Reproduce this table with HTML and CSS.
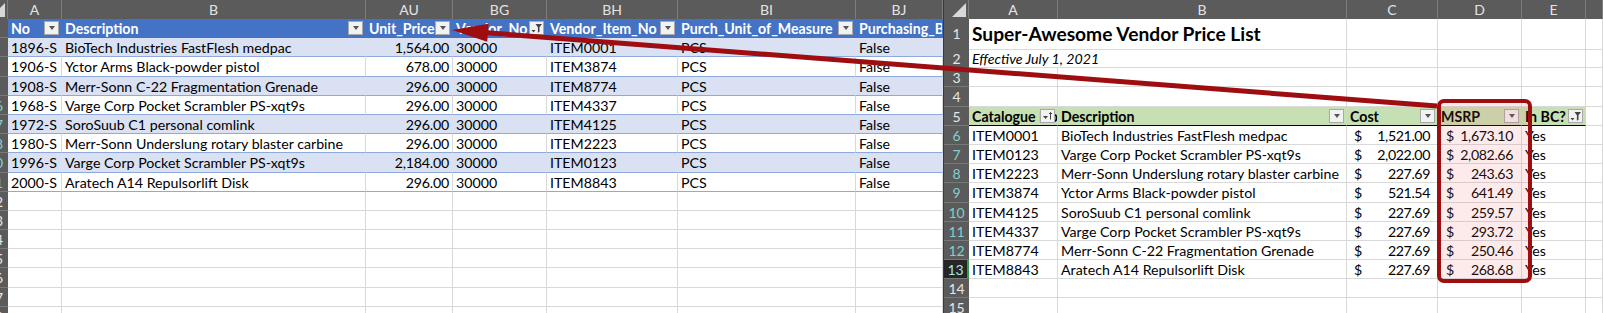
FILE: index.html
```html
<!DOCTYPE html>
<html>
<head>
<meta charset="utf-8">
<link rel="stylesheet" href="styles.css">
</head>
<body>
<div class="screen">
  <section class="sheet left">
    <div class="row colhdr">
      <div class="corner"></div><div class="ch">A</div><div class="ch">B</div><div class="ch dbl">AU</div><div class="ch">BG</div><div class="ch">BH</div><div class="ch">BI</div><div class="ch">BJ</div>
    </div>
    <div class="row thead">
      <div class="rh"></div>
      <div class="c">No<span class="fb dd"></span></div>
      <div class="c">Description<span class="fb dd"></span></div>
      <div class="c">Unit_Price<span class="fb dd"></span></div>
      <div class="c">Vendor_No<span class="fb"><svg width="13" height="12" viewBox="0 0 13 12"><path d="M1.5 8h4l-2 2.5z" fill="#444"/><path d="M5.5 2h6.5l-2.5 3.2v4.6l-1.6.9V5.2z" fill="#444"/></svg></span></div>
      <div class="c">Vendor_Item_No<span class="fb dd"></span></div>
      <div class="c">Purch_Unit_of_Measure<span class="fb dd"></span></div>
      <div class="c">Purchasing_Bl</div>
    </div>
    <div class="row band">
      <div class="rh"></div><div class="c">1896-S</div><div class="c">BioTech Industries FastFlesh medpac</div><div class="c num">1,564.00</div><div class="c">30000</div><div class="c">ITEM0001</div><div class="c">PCS</div><div class="c">False</div>
    </div>
    <div class="row plain">
      <div class="rh"></div><div class="c">1906-S</div><div class="c">Yctor Arms Black-powder pistol</div><div class="c num">678.00</div><div class="c">30000</div><div class="c">ITEM3874</div><div class="c">PCS</div><div class="c">False</div>
    </div>
    <div class="row band">
      <div class="rh"></div><div class="c">1908-S</div><div class="c">Merr-Sonn C-22 Fragmentation Grenade</div><div class="c num">296.00</div><div class="c">30000</div><div class="c">ITEM8774</div><div class="c">PCS</div><div class="c">False</div>
    </div>
    <div class="row plain">
      <div class="rh flt"><span>16</span></div><div class="c">1968-S</div><div class="c">Varge Corp Pocket Scrambler PS-xqt9s</div><div class="c num">296.00</div><div class="c">30000</div><div class="c">ITEM4337</div><div class="c">PCS</div><div class="c">False</div>
    </div>
    <div class="row band">
      <div class="rh flt"><span>17</span></div><div class="c">1972-S</div><div class="c">SoroSuub C1 personal comlink</div><div class="c num">296.00</div><div class="c">30000</div><div class="c">ITEM4125</div><div class="c">PCS</div><div class="c">False</div>
    </div>
    <div class="row plain">
      <div class="rh flt"><span>18</span></div><div class="c">1980-S</div><div class="c">Merr-Sonn Underslung rotary blaster carbine</div><div class="c num">296.00</div><div class="c">30000</div><div class="c">ITEM2223</div><div class="c">PCS</div><div class="c">False</div>
    </div>
    <div class="row band">
      <div class="rh flt"><span>20</span></div><div class="c">1996-S</div><div class="c">Varge Corp Pocket Scrambler PS-xqt9s</div><div class="c num">2,184.00</div><div class="c">30000</div><div class="c">ITEM0123</div><div class="c">PCS</div><div class="c">False</div>
    </div>
    <div class="row plain">
      <div class="rh flt"><span>21</span></div><div class="c">2000-S</div><div class="c">Aratech A14 Repulsorlift Disk</div><div class="c num">296.00</div><div class="c">30000</div><div class="c">ITEM8843</div><div class="c">PCS</div><div class="c">False</div>
    </div>
    <div class="row"><div class="rh"><span>22</span></div><div class="c"></div><div class="c"></div><div class="c"></div><div class="c"></div><div class="c"></div><div class="c"></div><div class="c"></div></div>
    <div class="row"><div class="rh"><span>23</span></div><div class="c"></div><div class="c"></div><div class="c"></div><div class="c"></div><div class="c"></div><div class="c"></div><div class="c"></div></div>
    <div class="row"><div class="rh"><span>24</span></div><div class="c"></div><div class="c"></div><div class="c"></div><div class="c"></div><div class="c"></div><div class="c"></div><div class="c"></div></div>
    <div class="row"><div class="rh"><span>25</span></div><div class="c"></div><div class="c"></div><div class="c"></div><div class="c"></div><div class="c"></div><div class="c"></div><div class="c"></div></div>
    <div class="row"><div class="rh"><span>26</span></div><div class="c"></div><div class="c"></div><div class="c"></div><div class="c"></div><div class="c"></div><div class="c"></div><div class="c"></div></div>
    <div class="row"><div class="rh"><span>27</span></div><div class="c"></div><div class="c"></div><div class="c"></div><div class="c"></div><div class="c"></div><div class="c"></div><div class="c"></div></div>
    <div class="row"><div class="rh"><span>28</span></div><div class="c"></div><div class="c"></div><div class="c"></div><div class="c"></div><div class="c"></div><div class="c"></div><div class="c"></div></div>
  </section>

  <section class="sheet right">
    <div class="row colhdr">
      <div class="corner"></div><div class="ch">A</div><div class="ch">B</div><div class="ch">C</div><div class="ch">D</div><div class="ch">E</div><div class="ch"></div>
    </div>
    <div class="row r1">
      <div class="rh">1</div><div class="c title">Super-Awesome Vendor Price List</div><div class="c"></div><div class="c"></div><div class="c"></div><div class="c"></div>
    </div>
    <div class="row">
      <div class="rh">2</div><div class="c sub">Effective July 1, 2021</div><div class="c"></div><div class="c"></div><div class="c"></div><div class="c"></div>
    </div>
    <div class="row">
      <div class="rh">3</div><div class="c"></div><div class="c"></div><div class="c"></div><div class="c"></div><div class="c"></div><div class="c"></div>
    </div>
    <div class="row">
      <div class="rh">4</div><div class="c"></div><div class="c"></div><div class="c"></div><div class="c"></div><div class="c"></div><div class="c"></div>
    </div>
    <div class="row ghead">
      <div class="rh">5</div>
      <div class="c g">Catalogue No<span class="fb"><svg width="13" height="12" viewBox="0 0 13 12"><path d="M2 6h5l-2.5 3z" fill="#444"/><path d="M9.5 2.5v7M8 4l1.5-1.5L11 4" stroke="#444" stroke-width="1" fill="none"/></svg></span></div>
      <div class="c g">Description<span class="fb dd"></span></div>
      <div class="c g">Cost<span class="fb dd"></span></div>
      <div class="c g">MSRP<span class="fb dd"></span></div>
      <div class="c g">In BC?<span class="fb"><svg width="13" height="12" viewBox="0 0 13 12"><path d="M1.5 8h4l-2 2.5z" fill="#444"/><path d="M5.5 2h6.5l-2.5 3.2v4.6l-1.6.9V5.2z" fill="#444"/></svg></span></div>
      <div class="c"></div>
    </div>
    <div class="row">
      <div class="rh flt">6</div><div class="c">ITEM0001</div><div class="c">BioTech Industries FastFlesh medpac</div><div class="c acc"><span>$</span><span>1,521.00</span></div><div class="c acc d"><span>$</span><span>1,673.10</span></div><div class="c">Yes</div><div class="c"></div>
    </div>
    <div class="row">
      <div class="rh flt">7</div><div class="c">ITEM0123</div><div class="c">Varge Corp Pocket Scrambler PS-xqt9s</div><div class="c acc"><span>$</span><span>2,022.00</span></div><div class="c acc d"><span>$</span><span>2,082.66</span></div><div class="c">Yes</div><div class="c"></div>
    </div>
    <div class="row">
      <div class="rh flt">8</div><div class="c">ITEM2223</div><div class="c">Merr-Sonn Underslung rotary blaster carbine</div><div class="c acc"><span>$</span><span>227.69</span></div><div class="c acc d"><span>$</span><span>243.63</span></div><div class="c">Yes</div><div class="c"></div>
    </div>
    <div class="row">
      <div class="rh flt">9</div><div class="c">ITEM3874</div><div class="c">Yctor Arms Black-powder pistol</div><div class="c acc"><span>$</span><span>521.54</span></div><div class="c acc d"><span>$</span><span>641.49</span></div><div class="c">Yes</div><div class="c"></div>
    </div>
    <div class="row">
      <div class="rh flt">10</div><div class="c">ITEM4125</div><div class="c">SoroSuub C1 personal comlink</div><div class="c acc"><span>$</span><span>227.69</span></div><div class="c acc d"><span>$</span><span>259.57</span></div><div class="c">Yes</div><div class="c"></div>
    </div>
    <div class="row">
      <div class="rh flt">11</div><div class="c">ITEM4337</div><div class="c">Varge Corp Pocket Scrambler PS-xqt9s</div><div class="c acc"><span>$</span><span>227.69</span></div><div class="c acc d"><span>$</span><span>293.72</span></div><div class="c">Yes</div><div class="c"></div>
    </div>
    <div class="row">
      <div class="rh flt">12</div><div class="c">ITEM8774</div><div class="c">Merr-Sonn C-22 Fragmentation Grenade</div><div class="c acc"><span>$</span><span>227.69</span></div><div class="c acc d"><span>$</span><span>250.46</span></div><div class="c">Yes</div><div class="c"></div>
    </div>
    <div class="row">
      <div class="rh sel">13</div><div class="c">ITEM8843</div><div class="c">Aratech A14 Repulsorlift Disk</div><div class="c acc"><span>$</span><span>227.69</span></div><div class="c acc d"><span>$</span><span>268.68</span></div><div class="c">Yes</div><div class="c"></div>
    </div>
    <div class="row">
      <div class="rh">14</div><div class="c"></div><div class="c"></div><div class="c"></div><div class="c"></div><div class="c"></div><div class="c"></div>
    </div>
    <div class="row">
      <div class="rh">15</div><div class="c"></div><div class="c"></div><div class="c"></div><div class="c"></div><div class="c"></div><div class="c"></div>
    </div>
  </section>

  <svg class="overlay" width="1603" height="313" viewBox="0 0 1603 313">
    <rect x="1439" y="101" width="91" height="180" rx="5" fill="rgba(240,100,100,0.13)" stroke="#9e0d10" stroke-width="4"/>
    <line x1="1437" y1="106" x2="484" y2="32.6" stroke="#9e0d10" stroke-width="5"/>
    <polygon points="452,30 488.6,23.8 487.2,41.8" fill="#9e0d10"/>
  </svg>
</div>
</body>
</html>
```

FILE: styles.css
```css
html, body {
  margin: 0;
  padding: 0;
  background: #ffffff;
}

.screen {
  position: relative;
  display: flex;
  width: 1603px;
  height: 313px;
  overflow: hidden;
  font-family: Lato, "Liberation Sans", sans-serif;
  font-size: 14.2px;
  color: #000;
}

.sheet {
  height: 313px;
  overflow: hidden;
  flex: none;
}

.left { width: 943px; }
.right { width: 660px; border-left: 1px solid #3a3a3a; box-sizing: border-box; }

.row {
  display: grid;
  height: 19.2px;
}

.left .row { grid-template-columns: 8px 54px 304px 87px 94px 131px 178px 87px; }
.right .row { grid-template-columns: 25px 89px 289px 91px 84px 64px 17px; }

.colhdr {
  height: 19px;
  background: #5b5b5b;
}

.ch {
  box-sizing: border-box;
  border-right: 1px solid #7c7c7c;
  color: #e4e4e4;
  font-size: 14px;
  line-height: 19px;
  text-align: center;
  overflow: hidden;
}

.corner {
  position: relative;
  box-sizing: border-box;
  border-right: 1px solid #7c7c7c;
  overflow: hidden;
}
.corner::after {
  content: "";
  position: absolute;
  right: 2px;
  bottom: 2px;
  border-left: 14px solid transparent;
  border-bottom: 14px solid #d8d8d8;
}

.rh {
  box-sizing: border-box;
  background: #5b5b5b;
  border-bottom: 1px solid #787878;
  color: #e6e6e6;
  font-size: 14px;
  line-height: 19px;
  text-align: center;
  overflow: hidden;
}
.left .rh {
  display: flex;
  justify-content: flex-end;
}
.left .rh span {
  flex: none;
  width: 26px;
  text-align: center;
}
.rh.flt { color: #7fd0cf; }
.rh.sel {
  background: #262626;
  color: #a8e6e4;
  border-right: 2px solid #2f9e5a;
}

.c {
  position: relative;
  box-sizing: border-box;
  border-right: 1px solid #d9d9d9;
  border-bottom: 1px solid #d9d9d9;
  padding: 0 3px;
  white-space: nowrap;
  overflow: hidden;
  line-height: 19px;
}
.num { text-align: right; letter-spacing: -0.2px; }

/* blue table (left) */
.thead .c {
  background: #4472c4;
  border-right-color: #4472c4;
  border-bottom-color: #4472c4;
  color: #fff;
  font-weight: bold;
}
.band .c {
  background: #d9e1f2;
  border-right-color: #d9e1f2;
  border-bottom-color: #8ea9db;
}
.plain .c { border-bottom-color: #8ea9db; }

/* filter buttons */
.fb {
  position: absolute;
  right: 2px;
  top: 2px;
  width: 15px;
  height: 14px;
  box-sizing: border-box;
  background: #f2f2f2;
  border: 1px solid #a9a9a9;
  display: flex;
  align-items: center;
  justify-content: center;
}
.fb.dd::after {
  content: "";
  border-left: 3.5px solid transparent;
  border-right: 3.5px solid transparent;
  border-top: 4px solid #555;
}

/* right sheet */
.r1 { height: 30px; }
.r1 .c, .r1 .rh { line-height: 30px; }
.title {
  grid-column: span 2;
  font-weight: bold;
  font-size: 19.2px;
  overflow: visible;
}
.sub {
  grid-column: span 2;
  font-style: italic;
}
.ghead .g {
  background: #c6e0b4;
  border-right-color: #c6e0b4;
  border-bottom-color: #000;
  font-weight: bold;
}
.acc {
  display: flex;
  justify-content: space-between;
  padding: 0 7px;
  letter-spacing: -0.4px;
}
.acc.d { padding: 0 8px 0 8px; }

.overlay {
  position: absolute;
  left: 0;
  top: 0;
  pointer-events: none;
}
```
